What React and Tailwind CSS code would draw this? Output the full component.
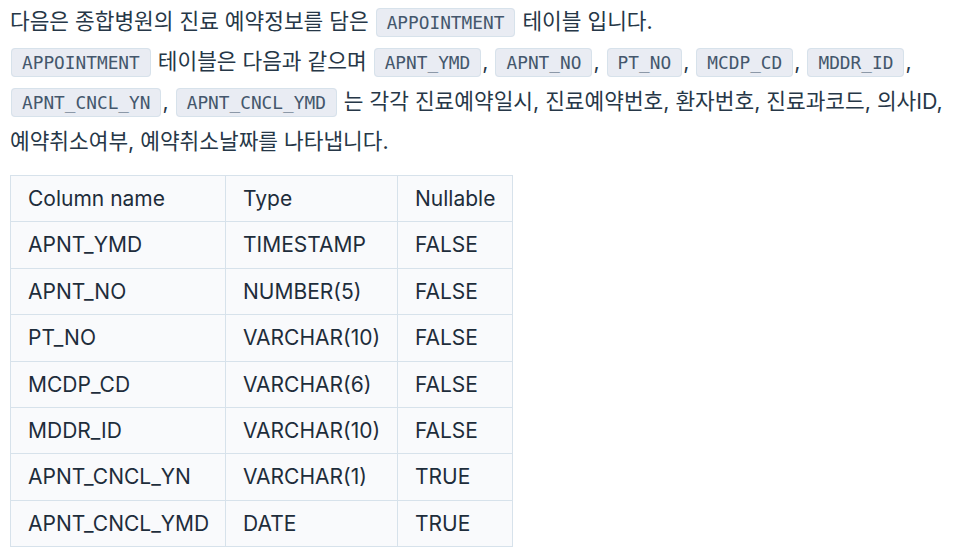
import React from 'react';

const Code = ({ children }) => (
  <code className="mx-[1px] rounded-[4px] border border-[#d7e2eb] bg-[#e9ecf3] px-[10px] py-[3px] font-['DejaVu_Sans_Mono',monospace] text-[17.8px] text-[#44576c]">
    {children}
  </code>
);

const rows = [
  ['APNT_YMD', 'TIMESTAMP', 'FALSE'],
  ['APNT_NO', 'NUMBER(5)', 'FALSE'],
  ['PT_NO', 'VARCHAR(10)', 'FALSE'],
  ['MCDP_CD', 'VARCHAR(6)', 'FALSE'],
  ['MDDR_ID', 'VARCHAR(10)', 'FALSE'],
  ['APNT_CNCL_YN', 'VARCHAR(1)', 'TRUE'],
  ['APNT_CNCL_YMD', 'DATE', 'TRUE'],
];

export default function App() {
  return (
    <div className="bg-white px-[10px] pt-[2px] font-['Inter','Noto_Sans_CJK_KR',sans-serif] text-[#263747]">
      <p className="text-[21.4px] leading-[39px]">
        다음은 종합병원의 진료 예약정보를 담은 <Code>APPOINTMENT</Code> 테이블 입니다.
        <br />
        <Code>APPOINTMENT</Code> 테이블은 다음과 같으며 <Code>APNT_YMD</Code>, <Code>APNT_NO</Code>,{' '}
        <Code>PT_NO</Code>, <Code>MCDP_CD</Code>, <Code>MDDR_ID</Code>, <Code>APNT_CNCL_YN</Code>,{' '}
        <Code>APNT_CNCL_YMD</Code> 는 각각 진료예약일시, 진료예약번호, 환자번호, 진료과코드, 의사ID,
        예약취소여부, 예약취소날짜를 나타냅니다.
      </p>
      <table className="mt-[14px] w-[502px] table-fixed border-collapse bg-[#f9fafc] text-[21px] text-[#1e2d3b]">
        <thead>
          <tr>
            <th className="h-[46.4px] w-[215px] border border-[#d7e2eb] pl-[17px] text-left font-normal">Column name</th>
            <th className="h-[46.4px] w-[172px] border border-[#d7e2eb] pl-[17px] text-left font-normal">Type</th>
            <th className="h-[46.4px] w-[115px] border border-[#d7e2eb] pl-[17px] text-left font-normal">Nullable</th>
          </tr>
        </thead>
        <tbody>
          {rows.map((r) => (
            <tr key={r[0]}>
              {r.map((c, i) => (
                <td key={i} className="h-[46.4px] whitespace-nowrap border border-[#d7e2eb] pl-[17px]">
                  {c}
                </td>
              ))}
            </tr>
          ))}
        </tbody>
      </table>
    </div>
  );
}
